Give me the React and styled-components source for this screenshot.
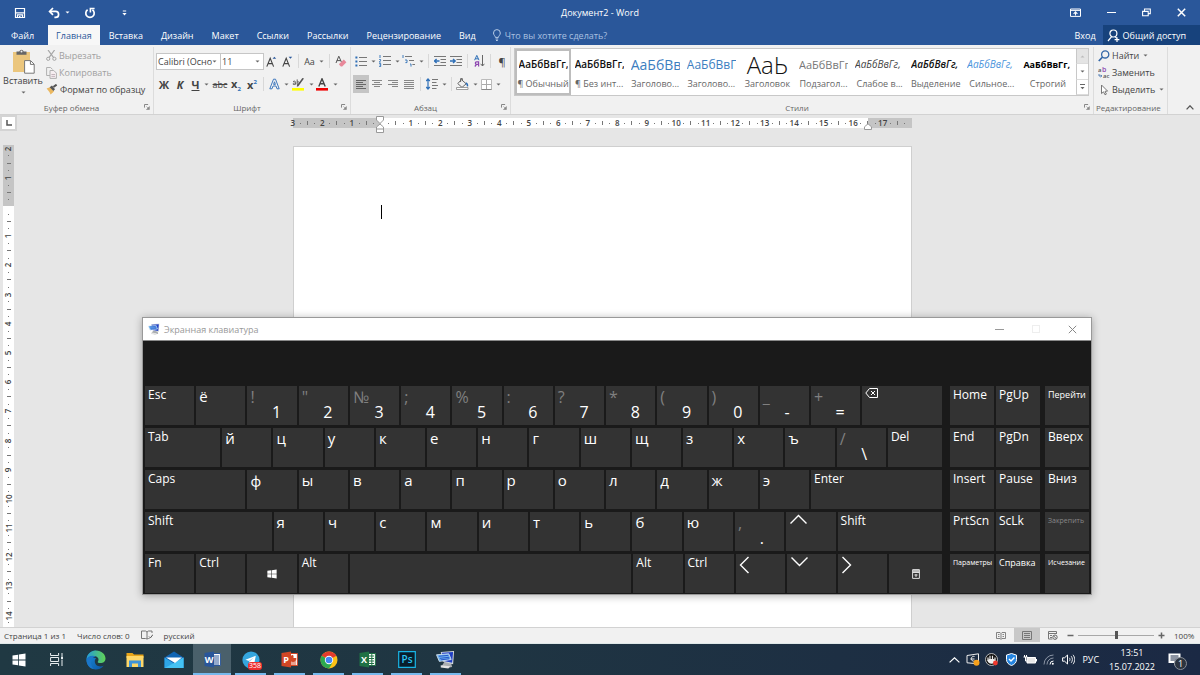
import React from 'react'
import styled, { createGlobalStyle } from 'styled-components'

const GlobalStyle = createGlobalStyle`
  * { box-sizing: border-box; }
  html, body { margin: 0; padding: 0; overflow: hidden; }
  body, button, input, select {
    font-family: "Open Sans", "Noto Sans", sans-serif;
    font-size: 9px;
    color: #444;
  }
  button {
    background: none;
    border: 0;
    padding: 0;
    margin: 0;
  }
  svg { display: block; flex: none; }
`

/* ---------- icons ---------- */

const Icon = ({ w = 12, h = 12, children, ...rest }) => (
  <svg width={w} height={h} viewBox={`0 0 ${w} ${h}`} fill="none" aria-hidden="true" {...rest}>
    {children}
  </svg>
)

const Caret = ({ color = '#666' }) => (
  <Icon w={5} h={3}><path d="M.5 .4h4L2.5 2.6z" fill={color} /></Icon>
)

const SaveIcon = () => (
  <Icon>
    <path d="M1.5 1.5h9v9h-9z" stroke="#fff" strokeWidth="1.2" />
    <path d="M2 5.8h8M3.5 11V7.8h5V11" stroke="#fff" strokeWidth="1.2" />
    <path d="M5 9h1.5v2H5z" fill="#fff" />
  </Icon>
)

const UndoIcon = () => (
  <Icon>
    <path d="M2 4.4h5.6a3 3 0 0 1 0 6H6.4" stroke="#fff" strokeWidth="1.7" />
    <path d="M5 1L1.6 4.4 5 7.8" stroke="#fff" strokeWidth="1.7" />
  </Icon>
)

const RedoIcon = () => (
  <Icon>
    <path d="M3.6 2.8a4.2 4.2 0 1 0 4.8 0" stroke="#fff" strokeWidth="1.7" />
    <path d="M6.4 5.4V1.5h4.2" stroke="#fff" strokeWidth="1.6" />
  </Icon>
)

const CustomizeIcon = () => (
  <Icon w={5} h={6}><path d="M.8 1h3.4" stroke="#fff" /><path d="M.4 3h4.2L2.5 5.4z" fill="#fff" /></Icon>
)

const RibbonOptionsIcon = () => (
  <Icon w={11} h={9}>
    <path d="M.5 1h10v7.4H.5zM.5 2.4h10" stroke="#fff" />
    <path d="M5.5 7.6V4.4M3.6 5.8l1.9-1.9 1.9 1.9" stroke="#fff" strokeWidth="1.1" />
  </Icon>
)

const RestoreIcon = () => (
  <Icon w={9} h={9}>
    <path d="M.6 3.4h5.6v4.4H.6zM2.5 3V1h5.8v4.6H6.6" stroke="#fff" strokeWidth="1.1" />
  </Icon>
)

const CloseIcon = ({ color = '#fff', sw = 1.5 }) => (
  <Icon w={9} h={9}><path d="M.8.8l7.4 7.4M8.2.8L.8 8.2" stroke={color} strokeWidth={sw} /></Icon>
)

const BulbIcon = () => (
  <Icon w={10} h={12}>
    <path d="M3.4 8.4C3.4 7 1.5 6.2 1.5 4a3.4 3.4 0 0 1 6.8 0c0 2.2-1.9 3-1.9 4.4zM3.6 10h2.6M4 11.5h1.8" stroke="#b8cce6" />
  </Icon>
)

const ShareIcon = () => (
  <Icon w={13} h={13}>
    <circle cx="6.4" cy="4.5" r="3.5" stroke="#fff" strokeWidth="1.2" />
    <path d="M4.6 7.6L1 12M8 7.6l1.8 1.6M7.6 10.6h4.8M10 8.2V13" stroke="#fff" strokeWidth="1.2" />
  </Icon>
)

const PasteIcon = () => (
  <Icon w={23} h={25}>
    <path d="M1 3h17v20H1z" fill="#ebc67d" />
    <path d="M4.5 2.4h2.8a2.3 2.3 0 0 1 4.4 0h2.8v3.4h-10z" fill="#666" />
    <circle cx="9.5" cy="2.6" r="1" fill="#f1f1f1" />
    <path d="M12.6 11.6h6l3.6 3.6v9h-9.6z" fill="#fff" stroke="#777" />
    <path d="M18.4 11.8v3.6h3.6" stroke="#777" />
  </Icon>
)

const CutIcon = () => (
  <Icon w={11} h={11}>
    <path d="M2 0l5.6 7.6M8.6 0L3 7.6" stroke="#a6a6a6" strokeWidth="1.2" />
    <circle cx="2.2" cy="8.8" r="1.6" stroke="#a6a6a6" />
    <circle cx="8.4" cy="8.8" r="1.6" stroke="#a6a6a6" />
  </Icon>
)

const CopyIcon = () => (
  <Icon w={11} h={12}>
    <path d="M4 8.5H.6v-8h4l2 2" stroke="#b0b0b0" />
    <path d="M4 3.5h3.8l2.6 2.6v5.3H4z" fill="#f6eef1" stroke="#b0b0b0" />
    <path d="M5.4 7.5h3.6M5.4 9.4h3.6" stroke="#c4b4bb" />
  </Icon>
)

const BrushIcon = () => (
  <Icon w={12} h={11}>
    <path d="M.6 4.4L4 3.2l4 4.4-3.4 3L3.4 8z" fill="#ebb860" />
    <path d="M3.6 3.2L6 1.6l3 3.6-1.6 1.8z" fill="#555" />
    <path d="M7.4 3L10.6.6" stroke="#555" strokeWidth="2" />
  </Icon>
)

const LauncherIcon = () => (
  <Icon w={6} h={6}>
    <path d="M.5 3.6V.5h3.6" stroke="#888" />
    <path d="M2.4 2.4l2.2 2.2M5.4 2.6v2.9H2.5z" stroke="#888" fill="#888" strokeWidth=".6" />
  </Icon>
)

const EraserIcon = () => (
  <Icon w={12} h={13}>
    <path d="M1 8L3.8 1.2 6.4 7M1.8 5.6h4" stroke="#555" />
    <path d="M4.6 8.6l4.2-4 2.6 2.6-4.2 4.2H5.8L4 9.6z" fill="#e8889a" />
  </Icon>
)

const GrowIcon = ({ down }) => (
  <Icon w={11} h={11}>
    <path d="M.8 10.6L4.2 2.2l3.4 8.4M2 7.6h4.4" stroke="#444" strokeWidth="1.1" />
    <path d={down ? 'M6.6.8h3.6L8.4 2.8z' : 'M6.6 2.8h3.6L8.4.8z'} fill="#2a579a" />
  </Icon>
)

const OutlineAIcon = () => (
  <Icon w={11} h={12}>
    <path d="M.8 10.8L4.5 1.2h2l3.7 9.6H8L7 8H4l-1 2.8zM4.6 6.4h1.8L5.5 3.8z" stroke="#3f78bd" strokeWidth="1" />
  </Icon>
)

const HighlightIcon = () => (
  <Icon w={13} h={13}>
    <path d="M12 .6L6.4 8.2l-1.6.6.2-1.6L10.4 0z" fill="#555" />
    <path d="M0 10h12v2.6H0z" fill="#ffff00" />
    <path d="M1 3.6c2-1.2 2.6 0 2.6 1v2M3.4 5c-3-.2-3 1.8-1.2 1.6L3.4 6M5.2 1.4v5M5.2 4c3-1.2 3 3.2 0 2.4" stroke="#555" strokeWidth=".9" />
  </Icon>
)

const FontColorIcon = () => (
  <Icon w={13} h={13}>
    <path d="M2.8 8.4L6 .8l3.2 7.6M4 5.8h4" stroke="#444" strokeWidth="1.4" />
    <path d="M0 10h12v2.6H0z" fill="#f00000" />
  </Icon>
)

const BulletsIcon = () => (
  <Icon w={12} h={11}>
    <path d="M.4.6h2v2h-2zM.4 4.6h2v2h-2zM.4 8.6h2v2h-2z" fill="#2e6fb7" />
    <path d="M4 1.5h8M4 5.5h8M4 9.5h8" stroke="#777" />
  </Icon>
)

const NumbersIcon = () => (
  <Icon w={12} h={12}>
    <path d="M1 0v3M.2 4.5h1.4v1.2L.2 7h1.6M.2 8.5h1.5v3H.2M.5 10h1" stroke="#2e6fb7" strokeWidth=".9" />
    <path d="M4 1.5h8M4 5.5h8M4 9.5h8" stroke="#777" />
  </Icon>
)

const MultilevelIcon = () => (
  <Icon w={13} h={12}>
    <path d="M1 0v3M3 5h2v2.6H3.4M8 9h1v2.6" stroke="#2e6fb7" strokeWidth=".9" />
    <path d="M3 1.5h7M7 5.5h5M10.4 9.5H13" stroke="#777" />
  </Icon>
)

const IndentIcon = ({ right }) => (
  <Icon w={12} h={11}>
    <path d="M0 .5h12M6.5 3.5H12M6.5 6.5H12M0 9.5h12" stroke="#777" />
    <path d={right ? 'M0 5h5M3 3l2.2 2L3 7' : 'M5.5 5h-5M2.6 3L.5 5l2.1 2'} stroke="#2e6fb7" strokeWidth="1.4" />
  </Icon>
)

const SortIcon = () => (
  <Icon w={11} h={12}>
    <path d="M.6 5.2L2.8.4 5 5.2M1.4 3.8h2.8" stroke="#2e6fb7" />
    <path d="M4.6 11.5V6.8H2.6a1.3 1.3 0 0 0 0 2.6h2M2.6 9.4L.8 11.5" stroke="#8d45b0" strokeWidth="1.2" />
    <path d="M8.5 0v11M6.6 8.8l1.9 2.2 1.9-2.2" stroke="#666" />
  </Icon>
)

const AlignIcon = ({ widths, color = '#888', center, right }) => (
  <Icon w={10} h={9}>
    {widths.map((w, i) => {
      const x = center ? (10 - w) / 2 : right ? 10 - w : 0
      return <rect key={i} x={x} y={i * 2} width={w} height="1" fill={color} />
    })}
  </Icon>
)

const SpacingIcon = () => (
  <Icon w={12} h={12}>
    <path d="M2 1v10M.2 3L2 1l1.8 2M.2 9L2 11l1.8-2" stroke="#2e6fb7" strokeWidth="1.2" />
    <path d="M6 1.5h6M6 4.5h4.5M6 7.5h6M6 10.5h4.5" stroke="#777" />
  </Icon>
)

const FillIcon = () => (
  <Icon w={13} h={12}>
    <path d="M5.4 1.6l4.8 4.2L6 9.4 1.8 5.6zM4.6 4V.6h1.8v2" stroke="#666" />
    <path d="M9.8 5c1.6.8 2 2 1.6 3.4" stroke="#2e6fb7" strokeWidth="1.4" />
    <path d="M.5 9.5h11.5v2H.5z" fill="#fff" stroke="#888" strokeWidth=".8" />
  </Icon>
)

const BordersIcon = () => (
  <Icon w={11} h={11}>
    <path d="M.5.5h10v10H.5z" fill="#fff" stroke="#bbb" />
    <path d="M5.5 1v9M1 5.5h9" stroke="#aaa" />
    <path d="M.5 10.5h10" stroke="#888" />
  </Icon>
)

const SearchIcon = () => (
  <Icon w={12} h={12}>
    <circle cx="7.2" cy="4.4" r="3.6" stroke="#3568a8" strokeWidth="1.3" />
    <path d="M4.6 7L.8 11" stroke="#3568a8" strokeWidth="1.8" />
  </Icon>
)

const ArrowIcon = () => (
  <Icon w={12} h={12}>
    <path d="M3.5 1v8.600l2-1.8 1.5 3 1.4-.7L7 7.3l2.6-.2z" stroke="#777" fill="#fff" />
  </Icon>
)

// the "ab → ac" glyph of the replace command
const ReplaceIcon = () => (
  <Icon w={12} h={13}>
    <text x="0" y="6" fontSize="6" fontWeight="600" fill="#555">a</text>
    <text x="4" y="6" fontSize="7" fontWeight="600" fill="#8d45b0">b</text>
    <text x="5" y="12" fontSize="6" fontWeight="600" fill="#555">ac</text>
    <path d="M1 8v2h2.8M2.6 8.8l1.2 1.2-1.2 1.2" stroke="#3568a8" strokeWidth=".8" />
  </Icon>
)

const ChevronUp = ({ color = '#555', w = 8, h = 5, sw = 1.3 }) => (
  <Icon w={w} h={h}><path d={`M.6 ${h - 0.6}L${w / 2} .8l${w / 2 - 0.6} ${h - 1.4}`} stroke={color} strokeWidth={sw} /></Icon>
)

const MonitorIcon = ({ size = 12 }) => (
  <svg width={size} height={size} viewBox="0 0 20 20" aria-hidden="true">
    <path d="M9 12l7 2 1 4-6 1-5-2z" fill="#a9adb0" />
    <path d="M5 2l14-1-1 14-11-3z" fill="#d7dde2" />
    <path d="M6 3l12-1-1 11.5-9-2z" fill="#1f3fc4" />
    <path d="M.5 5l13-1 2.5 6-12.5 2z" fill="#6fb4ee" stroke="#e7eef5" strokeWidth=".8" />
    <path d="M3 6.600l10-1M4 8.800l10-1.2M5 10.400l9-1.2" stroke="#2451c8" />
    <path d="M5 16l10 1-2 2.5-8-1z" fill="#e3e3e3" />
  </svg>
)

const WindowsIcon = ({ size = 14 }) => (
  <svg width={size} height={size} viewBox="0 0 14 14" fill="#fff" aria-hidden="true">
    <path d="M.5 2.5L6 1.7v4.9H.5zM6.8 1.6L13.5.6v6H6.8zM.5 7.4H6v4.9l-5.5-.8zM6.8 7.4h6.7v6l-6.7-1z" />
  </svg>
)

const TaskViewIcon = () => (
  <Icon w={14} h={13}>
    <path d="M.6 0v2.5h8V0M.6 13v-2.5h8V13M.6 4.5h8v4h-8z" stroke="#e8eef0" />
    <path d="M12 0v3M12 6.5V13" stroke="#e8eef0" />
    <path d="M11 3.5h2v2.5h-2z" fill="#e8eef0" />
  </Icon>
)

const EdgeIcon = () => (
  <svg width="20" height="20" viewBox="0 0 20 20" aria-hidden="true">
    <defs>
      <linearGradient id="edgeTop" x1="0" x2="1"><stop offset="0" stopColor="#249bd8" /><stop offset="1" stopColor="#61d455" /></linearGradient>
      <linearGradient id="edgeBody" x1="0" x2="1" y1="0" y2="1"><stop offset="0" stopColor="#1b8fdc" /><stop offset="1" stopColor="#0c55a4" /></linearGradient>
    </defs>
    <path d="M10 .5a9.5 9.5 0 1 0 7.6 15.2c-4 1.8-8.6.2-8.8-4.2-.1-1.4.6-2.5 1.4-3.2C5 7 .5 9 .5 9.7" fill="url(#edgeBody)" />
    <path d="M.5 9.5C1 4 5 .5 10 .5c5.5 0 9.5 3.7 9.5 8 0 3-2.4 4.6-5 4.6-2 0-3.2-.6-2.7-1.4 1.8-2.2.2-5.6-4.2-5.6-3.6 0-6.4 1.4-7.1 3.4z" fill="url(#edgeTop)" />
    <path d="M.5 9.5c2-4 7-4.2 9-3-5 1-6.3 8-1.5 12.8C3.6 18.5.3 14.5.5 9.5z" fill="#1a76c9" />
  </svg>
)

const ExplorerIcon = () => (
  <Icon w={18} h={16}>
    <path d="M.5 1h6l1.5 1.5h9.5V6H.5z" fill="#e8a519" />
    <path d="M.5 4h17v11H.5z" fill="#ffd868" />
    <path d="M3 8.5h12V15h-3v-3.5H6V15H3z" fill="#3f94d9" />
  </Icon>
)

const MailIcon = () => (
  <Icon w={20} h={18}>
    <path d="M.5 6.5L10 .5l9.5 6V17H.5z" fill="#1265b3" />
    <path d="M.5 6.5L10 12.5l9.5-6V17H.5z" fill="#2ea6e6" />
    <path d="M.5 17L12 11l7.5-4.5V17z" fill="#44c2f4" />
    <path d="M2 6.5h16l-7 5.5z" fill="#fff" />
  </Icon>
)

const OfficeIcon = ({ color, letter, kind }) => (
  <Icon w={17} h={17}>
    <path d="M9 2.5h7.4v12H9z" fill="#fff" stroke={color} />
    {kind === 'doc' && <path d="M10 5h5M10 7h5M10 9h5M10 11h5M10 13h5" stroke={color} />}
    {kind === 'sheet' && <path d="M10 5h5M10 7.5h5M10 10h5M10 12.5h5M12.8 3v11" stroke={color} />}
    {kind === 'slide' && <path d="M10 11h5M10 13h5M12 4.5v3h3a3 3 0 1 1-3-3z" stroke={color} fill={color} />}
    <path d="M.5 2L10 .4v16.2L.5 15z" fill={color} />
    <text x="5" y="12" fontSize="9" fontWeight="700" textAnchor="middle" fill="#fff">{letter}</text>
  </Icon>
)

const TelegramIcon = () => (
  <Icon w={18} h={18}>
    <circle cx="9" cy="9" r="8.6" fill="#35a6de" />
    <path d="M3.4 8.7l10.4-4-1.7 8.7-3-2.2-1.6 1.5-.3-2.8z" fill="#fff" />
    <path d="M6.8 9.8l5-3.4-3.8 4z" fill="#a9cfe8" />
  </Icon>
)

const ChromeIcon = () => (
  <Icon w={18} h={18}>
    <circle cx="9" cy="9" r="8.5" fill="#fbc116" />
    <path d="M9 9L1.64 4.75A8.5 8.5 0 0 1 16.36 4.75z" fill="#e33b2e" />
    <path d="M1.64 4.75A8.5 8.5 0 0 0 9 17.5l3-5-3-3.5z" fill="#2da94f" />
    <circle cx="9" cy="9" r="4.2" fill="#fff" />
    <circle cx="9" cy="9" r="3.3" fill="#4285f4" />
  </Icon>
)

const PsIcon = () => (
  <Icon w={18} h={17}>
    <path d="M.7.7h16.6v15.6H.7z" fill="#071d2b" stroke="#19b5e6" strokeWidth="1.2" />
    <text x="9" y="12" fontSize="10" fontWeight="600" textAnchor="middle" fill="#2cc4f2">Ps</text>
  </Icon>
)

/* ---------- title bar and tabs ---------- */

const Screen = styled.div`
  display: flex;
  flex-direction: column;
  height: 100vh;
  background: #e6e6e6;
`

const TitleBar = styled.header`
  display: grid;
  grid-template-columns: 1fr auto 1fr;
  align-items: center;
  height: 25px;
  background: #2a579a;
  color: #fff;
`

const QuickAccess = styled.div`
  display: grid;
  grid-template-columns: 34px 36px 38px auto;
  align-items: center;
  padding-left: 14px;
`

const QuickButton = styled.button`
  display: flex;
  align-items: center;
  gap: 5px;
`

const WindowButtons = styled.div`
  display: flex;
  align-items: center;
  justify-content: flex-end;
  gap: 26px;
  padding-right: 14px;
`

const Minus = styled.span`
  display: block;
  width: 9px;
  height: 1px;
  background: ${(p) => p.$color || '#fff'};
`

const Tabs = styled.nav`
  display: flex;
  align-items: stretch;
  height: 20px;
  background: #2a579a;
`

const Tab = styled.button`
  padding: 0 ${(p) => (p.$active ? 8 : 9)}px;
  line-height: 19px;
  color: ${(p) => (p.$active ? '#2a579a' : '#fff')};
  background: ${(p) => (p.$active ? '#f7f7f7' : 'none')};

  &:first-child { padding: 0 14px 0 11px; }
`

const TellMe = styled.label`
  display: flex;
  flex: 1;
  align-items: center;
  gap: 3px;
  padding-left: 7px;
`

const TellInput = styled.input`
  width: 160px;
  border: 0;
  padding: 0;
  background: none;

  &::placeholder { color: #a9c0e0; opacity: 1; }
`

const SignIn = styled(Tab)`
  padding: 0 7px;
`

const Share = styled.button`
  display: flex;
  align-items: center;
  gap: 3px;
  padding: 0 14px 0 4px;
  background: #17427c;
  color: #fff;
`

/* ---------- ribbon ---------- */

const Ribbon = styled.div`
  display: flex;
  height: 70px;
  padding-top: 2px;
  background: #f1f1f1;
  border-bottom: 1px solid #d2d2d2;
`

const Group = styled.section`
  display: flex;
  flex-direction: column;
  flex: ${(p) => (p.$w ? `0 0 ${p.$w}px` : '1 1 0')};
  min-width: 0;
  padding-left: 2px;
  border-right: 1px solid #dcdcdc;
`

const GroupBody = styled.div`
  display: flex;
  height: 53px;
`

const GroupFooter = styled.footer`
  display: grid;
  grid-template-columns: 1fr 12px;
  align-items: center;
  height: 14px;
  font-size: 8px;
  color: #666;
  text-align: center;
  white-space: nowrap;

  button { justify-self: center; }
`

const PasteButton = styled.button`
  display: flex;
  flex-direction: column;
  align-items: center;
  width: 42px;
  padding-top: 2px;
  line-height: 14px;

  svg:last-child { margin-top: 3px; }
`

const Commands = styled.div`
  display: grid;
  grid-auto-rows: 17px;
  align-content: start;
  padding-left: 2px;
`

const Command = styled.button`
  display: flex;
  align-items: center;
  gap: 2px;
  white-space: nowrap;
  color: ${(p) => (p.disabled ? '#a0a0a0' : '#444')};

  svg:last-child:not(:first-child) { margin-left: 2px; }
`

const ToolRows = styled.div`
  display: flex;
  flex-direction: column;
  gap: 7px;
  padding-top: 6px;
`

const ToolRow = styled.div`
  display: flex;
  align-items: center;
  height: 16px;
`

const Tool = styled.button`
  display: flex;
  align-items: center;
  justify-content: center;
  gap: 4px;
  width: ${(p) => (p.$menu ? 24 : 16)}px;
  height: 18px;
  background: ${(p) => (p.$on ? '#c5c5c5' : 'none')};
  font-size: ${(p) => (p.$small ? 9 : 11)}px;
  font-weight: ${(p) => (p.$light ? 400 : 700)};
  color: #444;
  white-space: nowrap;

  sub, sup {
    font-size: 6px;
    line-height: 6px;
    color: #2e6fb7;
  }
`

const Divider = styled.span`
  width: 1px;
  height: 14px;
  margin: 0 3px;
  background: #d8d8d8;
`

const ComboBox = styled.span`
  display: flex;
  align-items: center;
  width: ${(p) => p.$w}px;
  height: 17px;
  padding-right: 3px;
  margin-right: -1px;
  border: 1px solid #c6c6c6;
  background: #fff;
`

const ComboSelect = styled.select`
  appearance: none;
  flex: 1;
  min-width: 0;
  height: 15px;
  border: 0;
  padding: 0 0 0 1px;
  background: none;
  text-overflow: clip;
`

const Gallery = styled.div`
  display: flex;
  flex: 1;
  height: 48px;
  margin: 1px 4px 0 1px;
  border: 1px solid #c8c8c8;
  background: #fff;
`

const StyleCard = styled.button`
  display: flex;
  flex: 1;
  flex-direction: column;
  align-items: center;
  min-width: 0;
  border: 2px solid ${(p) => (p.$active ? '#bdbdbd' : 'transparent')};
  overflow: hidden;
`

const Preview = styled.span`
  width: 49px;
  height: 27px;
  overflow: hidden;
  white-space: nowrap;
  text-align: ${(p) => (p.$big ? 'center' : 'left')};
  font-size: ${(p) => p.$size || 10}px;
  line-height: 27px;
  font-weight: ${(p) => p.$weight || 400};
  font-style: ${(p) => (p.$italic ? 'italic' : 'normal')};
  color: ${(p) => p.$color || '#111'};
`

const StyleName = styled.span`
  line-height: 12px;
  color: #666;
  white-space: nowrap;
`

const GalleryScroll = styled.div`
  display: grid;
  grid-template-rows: repeat(3, 1fr);
  width: 12px;

  button {
    display: grid;
    place-items: center;
    border-left: 1px solid #c8c8c8;
    border-bottom: 1px solid #dcdcdc;
  }
  button:first-child { background: #e4e4e4; }
`

const RibbonEnd = styled.div`
  display: flex;
  flex: 0 0 32px;
  align-items: flex-end;
  justify-content: center;
  padding: 0 0 4px 12px;
`

/* ---------- document area ---------- */

const Workspace = styled.main`
  position: relative;
  display: grid;
  grid-template-columns: 17px 1fr 12px;
  grid-template-rows: 30px 1fr;
  flex: 1;
  min-height: 0;
`

const TabStop = styled.button`
  display: grid;
  place-items: center;
  width: 17px;
  height: 16px;
  border: 2px solid #d4d4d4;
  background: #fff;
`

const PaperColumn = styled.div`
  display: flex;
  justify-content: center;
  min-height: 0;
`

const HRuler = styled.div`
  width: 100%;
  max-width: 619px;
  height: 10px;
  margin-top: 3px;
  background: linear-gradient(90deg, #c5c5c5 14.2%, #fff 14.2% 92.9%, #c5c5c5 92.9%);
`

const HTicks = styled.div`
  display: flex;
  margin: 0 4px 0 -4px;
`

const VRuler = styled.div`
  width: 11px;
  min-height: 0;
  margin-left: 3px;
  overflow: hidden;
  background: linear-gradient(#c5c5c5 61px, #fff 61px);
`

const VTicks = styled.div`
  display: flex;
  flex-direction: column;
  height: 100%;
`

const Tick = styled.span`
  display: flex;
  flex: 1 1 0;
  align-items: center;
  justify-content: center;
  min-width: 0;
  min-height: 0;
  height: ${(p) => (p.$vertical ? 'auto' : '10px')};
  width: ${(p) => (p.$vertical ? '11px' : 'auto')};
  font-size: 8px;
  line-height: 10px;
  color: #444;
  white-space: nowrap;

  b {
    font-weight: 600;
    transform: ${(p) => (p.$vertical ? 'rotate(-90deg)' : 'none')};
  }
  i {
    flex: none;
    width: ${(p) => (p.$vertical && p.$long ? 4 : 1)}px;
    height: ${(p) => (!p.$vertical && p.$long ? 4 : 1)}px;
    background: #777;
  }
`

const IndentMarks = styled.div`
  position: absolute;
  z-index: 1;
  top: ${(p) => (p.$right ? 8 : 1)}px;
  left: ${(p) => p.$left};
`

const Paper = styled.article`
  width: 100%;
  max-width: 619px;
  margin-top: 1px;
  padding: 58px 87px;
  border: solid #cfcfcf;
  border-width: 1px 1px 0;
  background: #fff;
`

const TextCaret = styled.span`
  display: block;
  width: 1px;
  height: 14px;
  background: #000;
`

/* ---------- on-screen keyboard ---------- */

const KeyboardWindow = styled.section`
  position: absolute;
  z-index: 2;
  top: 202px;
  left: 142px;
  width: 950px;
  border: 1px solid #999;
  background: #1a1a1a;
  box-shadow: 0 1px 8px rgba(0, 0, 0, .3);
`

const KeyboardTitle = styled.header`
  display: flex;
  align-items: center;
  gap: 4px;
  height: 23px;
  padding: 0 14px 0 5px;
  border-bottom: 1px solid #8a8a8a;
  background: #fff;
  color: #999;
`

const KeyboardButtons = styled.div`
  display: flex;
  align-items: center;
  gap: 28px;
  margin-left: auto;
`

const MaxBox = styled.span`
  display: block;
  width: 8px;
  height: 8px;
  border: 1px solid #eee;
`

const KeyArea = styled.div`
  display: flex;
  gap: 8px;
  padding: 45px 2px 1px 2px;
`

const KeyRows = styled.div`
  display: flex;
  flex-direction: column;
  flex: 1;
  gap: 3px;
`

const KeyRow = styled.div`
  display: grid;
  grid-template-columns: ${(p) => p.$cols};
  gap: 2px;
`

const NavBlock = styled.div`
  display: grid;
  grid-template-columns: 44px 44px 1px 44px;
  grid-auto-rows: 39px;
  gap: 3px 2px;

  button:nth-child(3n) { grid-column: 4; }
`

const Key = styled.button`
  display: flex;
  align-items: ${(p) => (p.$center ? 'center' : 'flex-start')};
  justify-content: ${(p) => (p.$center ? 'center' : 'flex-start')};
  min-width: 0;
  height: 39px;
  padding: ${(p) => (p.$center ? '0' : '1px 3px')};
  background: #333;
  color: ${(p) => (p.$dim ? '#888' : '#fff')};
  font-size: ${(p) => p.$size || 12}px;
  line-height: 16px;
  text-align: left;
  white-space: nowrap;
`

const LetterKey = styled(Key)`
  font-size: 15px;
  line-height: 18px;
`

const DualKey = styled(Key)`
  display: grid;
  grid-template-columns: 1fr 1fr;
  grid-template-rows: 15px 15px;
  align-items: center;
  padding-top: 3px;
  font-size: 16px;

  span { color: #808080; }
  b {
    grid-area: 2 / 2;
    font-weight: 400;
    line-height: 14px;
  }
`

/* ---------- status bar ---------- */

const StatusBar = styled.footer`
  display: flex;
  align-items: center;
  height: 17px;
  padding: 0 0 1px 4px;
  gap: 11px;
  border-top: 1px solid #d2d2d2;
  border-bottom: 1px solid #dfe8e8;
  background: #f1f1f1;
  font-size: 8px;
`

const Views = styled.div`
  display: flex;
  align-self: stretch;
  margin-left: auto;
`

const ViewButton = styled.button`
  display: grid;
  place-items: center;
  width: 26px;
  background: ${(p) => (p.$on ? '#c8c8c8' : 'none')};
`

const Zoom = styled.div`
  display: flex;
  align-items: center;
  gap: 4px;
  padding-right: 6px;
  margin-left: -10px;

  output { width: 20px; margin-left: 5px; }
`

const Slider = styled.input`
  appearance: none;
  width: 76px;
  height: 8px;
  margin: 0;
  background: linear-gradient(#a8a8a8, #a8a8a8) center / 100% 1px no-repeat;

  &::-webkit-slider-thumb {
    appearance: none;
    width: 3px;
    height: 8px;
    background: #555;
  }
`

/* ---------- taskbar ---------- */

const Taskbar = styled.footer`
  display: flex;
  height: 31px;
  background: linear-gradient(90deg, #203943, #1f3542 40%, #1b2944);
  color: #fff;
`

const TaskButton = styled.button`
  display: flex;
  flex: 0 0 ${(p) => (p.$narrow ? 38 : 39)}px;
  flex-direction: column;
  align-items: center;
  justify-content: center;
  background: ${(p) => (p.$active ? '#4a606b' : 'none')};
`

const RunningButton = styled(TaskButton)`
  position: relative;

  &::after {
    content: '';
    position: absolute;
    right: ${(p) => (p.$active ? 0 : 4)}px;
    bottom: 0;
    left: ${(p) => (p.$active ? 0 : 4)}px;
    height: 2px;
    background: #76b9ed;
  }
`

const Count = styled.span`
  position: absolute;
  right: 8px;
  bottom: 5px;
  padding: 0 1px;
  border-radius: 3px;
  background: #ee2f2f;
  font-size: 7px;
  line-height: 8px;
  color: #fff;
`

const Tray = styled.div`
  display: flex;
  align-items: center;
  gap: 5px;
  margin-left: auto;
`

const TrayButton = styled.button`
  display: grid;
  place-items: center;
  width: 14px;
`

const Language = styled.button`
  margin-left: 2px;
  color: #fff;
`

const Clock = styled.time`
  margin-left: 5px;
  line-height: 14px;
  text-align: center;
`

const Notify = styled.button`
  position: relative;
  margin-left: 8px;
  width: 32px;
`

const Badge = styled.span`
  position: absolute;
  top: 4px;
  left: 6px;
  width: 13px;
  height: 13px;
  border: 1px solid #8a8f98;
  border-radius: 50%;
  background: #2c3440;
  line-height: 11px;
  color: #fff;
`

/* ---------- data ---------- */

const tabs = ['Файл', 'Главная', 'Вставка', 'Дизайн', 'Макет', 'Ссылки', 'Рассылки', 'Рецензирование', 'Вид']

const sample = 'АаБбВвГг,'
const docStyles = [
  { name: '¶ Обычный', weight: 600, active: true },
  { name: '¶ Без инт...', weight: 600 },
  { name: 'Заголово...', size: 14, color: '#3c7ebf' },
  { name: 'Заголово...', size: 12, color: '#3c7ebf' },
  { name: 'Заголовок', size: 24, big: true, text: 'АаЬ', weight: 300 },
  { name: 'Подзагол...', size: 11, color: '#777' },
  { name: 'Слабое в...', color: '#444', italic: true },
  { name: 'Выделение', weight: 600, italic: true },
  { name: 'Сильное...', color: '#4a94dc', italic: true },
  { name: 'Строгий', weight: 700, size: 9, color: '#000' },
]

const keyRows = [
  ['Esc', 'ё', '! 1', '" 2', '№ 3', '; 4', '% 5', ': 6', '? 7', '* 8', '( 9', ') 0', '_ -', '+ =', { icon: 'back', u: 1.62 }],
  [{ t: 'Tab', u: 1.53 }, ...'йцукенгшщзхъ', '/ \\', { t: 'Del', u: 1.1 }],
  [{ t: 'Caps', u: 2.04 }, ...'фывапролджэ', { t: 'Enter', u: 2.66 }],
  [{ t: 'Shift', u: 2.57 }, ...'ячсмитьбю', ', .', { icon: 'up' }, { t: 'Shift', u: 2.12 }],
  ['Fn', 'Ctrl', { icon: 'win', center: true }, 'Alt', { t: '', u: 5.72 }, 'Alt', 'Ctrl', { icon: 'left' }, { icon: 'down' }, { icon: 'right' }, { icon: 'menu', u: 1.07, center: true }],
]

const navKeys = [
  ['Home'], ['PgUp'], ['Перейти', 9],
  ['End'], ['PgDn'], ['Вверх'],
  ['Insert'], ['Pause'], ['Вниз'],
  ['PrtScn'], ['ScLk'], ['Закрепить', 7, true],
  ['Параметры', 7], ['Справка', 9], ['Исчезание', 7],
]

const keyIcons = {
  back: <Icon w={13} h={12}><path d="M4.5 1.5h8v9h-8L.8 6zM6 4l4 4M10 4L6 8" stroke="#fff" /></Icon>,
  up: <Icon w={18} h={12}><path d="M1.5 10.5L9.5 2.5l8 8" stroke="#fff" strokeWidth="1.4" /></Icon>,
  down: <Icon w={18} h={12}><path d="M1.5 2.5L9.5 10.5l8-8" stroke="#fff" strokeWidth="1.4" /></Icon>,
  left: <Icon w={12} h={19}><path d="M9.5 2L1.5 10l8 8" stroke="#fff" strokeWidth="1.4" /></Icon>,
  right: <Icon w={12} h={19}><path d="M1.5 2L9.5 10l-8 8" stroke="#fff" strokeWidth="1.4" /></Icon>,
  win: <WindowsIcon size={10} />,
  menu: <Icon w={8} h={10}><path d="M.6.6h6.8v8.8H.6zM.6 3.5h6.8M2.4 6h3.2M4 5v3" stroke="#ddd" /><path d="M1 1h6v2H1z" fill="#bbb" /></Icon>,
}

/* ---------- parts ---------- */

function makeTicks(labels) {
  return labels.flatMap((label) => [label, '.', '|', '.'])
}

const hTicks = makeTicks([3, 2, 1, '', ...Array.from({ length: 17 }, (_, i) => i + 1)])
const vTicks = makeTicks([2, 1, '', ...Array.from({ length: 14 }, (_, i) => i + 1)]).slice(0, 66)

const Ticks = ({ items, vertical }) =>
  items.map((t, i) => (
    <Tick key={i} $vertical={vertical} $long={t === '|'}>
      {t === '.' || t === '|' ? <i /> : <b>{t}</b>}
    </Tick>
  ))

const columns = (row) => row.map((item) => `minmax(0, ${item.u || 1}fr)`).join(' ')

function OfficeKey({ item }) {
  if (typeof item === 'object') {
    return (
      <Key $center={item.center} aria-label={item.icon || item.t || 'Пробел'}>
        {item.icon ? keyIcons[item.icon] : item.t}
      </Key>
    )
  }
  if (item.includes(' ')) {
    const [top, bottom] = item.split(' ')
    return <DualKey><span>{top}</span><b>{bottom}</b></DualKey>
  }
  return item.length === 1 ? <LetterKey>{item}</LetterKey> : <Key>{item}</Key>
}

function RibbonGroup({ title, width, launcher = true, children }) {
  return (
    <Group $w={width}>
      <GroupBody>{children}</GroupBody>
      <GroupFooter>
        <span>{title}</span>
        {launcher && <button aria-label={`Параметры: ${title}`}><LauncherIcon /></button>}
      </GroupFooter>
    </Group>
  )
}

function WordRibbon() {
  return (
    <Ribbon>
      <RibbonGroup title="Буфер обмена" width={154}>
        <PasteButton><PasteIcon />Вставить<Caret /></PasteButton>
        <Commands>
          <Command disabled><CutIcon />Вырезать</Command>
          <Command disabled><CopyIcon />Копировать</Command>
          <Command><BrushIcon />Формат по образцу</Command>
        </Commands>
      </RibbonGroup>

      <RibbonGroup title="Шрифт" width={197}>
        <ToolRows>
          <ToolRow>
            <ComboBox $w={65}>
              <ComboSelect aria-label="Шрифт"><option>Calibri (Основной текст)</option></ComboSelect>
              <Caret />
            </ComboBox>
            <ComboBox $w={44}>
              <ComboSelect aria-label="Размер"><option>11</option></ComboSelect>
              <Caret />
            </ComboBox>
            <Tool aria-label="Увеличить"><GrowIcon /></Tool>
            <Tool aria-label="Уменьшить"><GrowIcon down /></Tool>
            <Divider />
            <Tool $menu $light $small>Aa<Caret /></Tool>
            <Divider />
            <Tool aria-label="Очистить формат"><EraserIcon /></Tool>
          </ToolRow>
          <ToolRow>
            <Tool>Ж</Tool>
            <Tool><em>К</em></Tool>
            <Tool $menu><u>Ч</u><Caret /></Tool>
            <Tool $light $small><s>abc</s></Tool>
            <Tool><span>x<sub>2</sub></span></Tool>
            <Tool><span>x<sup>2</sup></span></Tool>
            <Divider />
            <Tool $menu aria-label="Эффекты"><OutlineAIcon /><Caret /></Tool>
            <Tool $menu aria-label="Выделение цветом"><HighlightIcon /><Caret /></Tool>
            <Tool $menu aria-label="Цвет текста"><FontColorIcon /><Caret /></Tool>
          </ToolRow>
        </ToolRows>
      </RibbonGroup>

      <RibbonGroup title="Абзац" width={160}>
        <ToolRows>
          <ToolRow>
            <Tool $menu aria-label="Маркеры"><BulletsIcon /><Caret /></Tool>
            <Tool $menu aria-label="Нумерация"><NumbersIcon /><Caret /></Tool>
            <Tool $menu aria-label="Многоуровневый список"><MultilevelIcon /><Caret /></Tool>
            <Divider />
            <Tool aria-label="Уменьшить отступ"><IndentIcon /></Tool>
            <Tool aria-label="Увеличить отступ"><IndentIcon right /></Tool>
            <Divider />
            <Tool aria-label="Сортировка"><SortIcon /></Tool>
            <Divider />
            <Tool $light>¶</Tool>
          </ToolRow>
          <ToolRow>
            <Tool $on aria-label="По левому краю"><AlignIcon widths={[10, 7, 10, 7, 10]} color="#666" /></Tool>
            <Tool aria-label="По центру"><AlignIcon widths={[10, 6, 10, 6]} center /></Tool>
            <Tool aria-label="По правому краю"><AlignIcon widths={[10, 6, 10, 6]} right /></Tool>
            <Tool aria-label="По ширине"><AlignIcon widths={[10, 10, 10, 10, 10]} /></Tool>
            <Divider />
            <Tool $menu aria-label="Интервал"><SpacingIcon /><Caret /></Tool>
            <Divider />
            <Tool $menu aria-label="Заливка"><FillIcon /><Caret /></Tool>
            <Tool $menu aria-label="Границы"><BordersIcon /><Caret /></Tool>
          </ToolRow>
        </ToolRows>
      </RibbonGroup>

      <RibbonGroup title="Стили">
        <Gallery>
          {docStyles.map((s, i) => (
            <StyleCard key={i} $active={s.active}>
              <Preview $size={s.size} $weight={s.weight} $color={s.color} $italic={s.italic} $big={s.big}>
                {s.text || sample}
              </Preview>
              <StyleName>{s.name}</StyleName>
            </StyleCard>
          ))}
          <GalleryScroll>
            <button aria-label="Вверх"><Icon w={5} h={3}><path d="M.5 2.6h4L2.5.6z" fill="#bbb" /></Icon></button>
            <button aria-label="Вниз"><Caret /></button>
            <button aria-label="Ещё"><Icon w={5} h={6}><path d="M0 .5h5" stroke="#666" /><path d="M.5 3h4L2.5 5.2z" fill="#666" /></Icon></button>
          </GalleryScroll>
        </Gallery>
      </RibbonGroup>

      <RibbonGroup title="Редактирование" width={74} launcher={false}>
        <Commands>
          <Command><SearchIcon />Найти<Caret /></Command>
          <Command><ReplaceIcon />Заменить</Command>
          <Command><ArrowIcon />Выделить<Caret /></Command>
        </Commands>
      </RibbonGroup>

      <RibbonEnd><button aria-label="Свернуть ленту"><ChevronUp /></button></RibbonEnd>
    </Ribbon>
  )
}

function ScreenKeyboard() {
  return (
    <KeyboardWindow>
      <KeyboardTitle>
        <MonitorIcon />
        Экранная клавиатура
        <KeyboardButtons>
          <button aria-label="Свернуть"><Minus $color="#999" /></button>
          <button aria-label="Развернуть" disabled><MaxBox /></button>
          <button aria-label="Закрыть"><CloseIcon color="#888" sw={1} /></button>
        </KeyboardButtons>
      </KeyboardTitle>
      <KeyArea>
        <KeyRows>
          {keyRows.map((row, i) => (
            <KeyRow key={i} $cols={columns(row)}>
              {row.map((item, j) => <OfficeKey key={j} item={item} />)}
            </KeyRow>
          ))}
        </KeyRows>
        <NavBlock>
          {navKeys.map(([label, size, dim]) => (
            <Key key={label} $size={size} $dim={dim}>{label}</Key>
          ))}
        </NavBlock>
      </KeyArea>
    </KeyboardWindow>
  )
}

function Status() {
  return (
    <StatusBar>
      <span>Страница 1 из 1</span>
      <span>Число слов: 0</span>
      <Icon w={12} h={10}>
        <path d="M.5 1h4l1.5 1v7L4.5 8.5h-4zM6 2l1.5-1H11v2M6 9l1.5-.5h1" stroke="#777" />
        <path d="M8 6.5l1.4 1.4L12 4.5" stroke="#555" />
      </Icon>
      <span>русский</span>
      <Views>
        <ViewButton aria-label="Режим чтения">
          <Icon w={10} h={9}><path d="M.5 1.5h3.5l1 1 1-1h3.5v6H6l-1 1-1-1H.5zM5 2.5v5.5M2 3.5h1.5M2 5.5h1.5M6.5 3.5H8M6.5 5.5H8" stroke="#777" strokeWidth=".9" /></Icon>
        </ViewButton>
        <ViewButton $on aria-label="Разметка страницы">
          <Icon w={10} h={9}><path d="M.5.5h9v8h-9zM2 2.5h6M2 4.5h6M2 6.5h6" stroke="#777" /></Icon>
        </ViewButton>
        <ViewButton aria-label="Веб-документ">
          <Icon w={10} h={9}><path d="M4.5 8H.5V.5h8V3M.5 2.5h8M2 4.5h2M2 6.5h2" stroke="#777" /><circle cx="7" cy="6.2" r="2.2" stroke="#666" /><path d="M5.5 4.8l3 3" stroke="#666" /></Icon>
        </ViewButton>
      </Views>
      <Zoom>
        <button aria-label="Уменьшить масштаб"><Icon w={7} h={7}><path d="M.5 3.5h6" stroke="#666" strokeWidth="1.5" /></Icon></button>
        <Slider type="range" min="0" max="100" defaultValue="50" aria-label="Масштаб" />
        <button aria-label="Увеличить масштаб"><Icon w={7} h={7}><path d="M.5 3.5h6M3.5.5v6" stroke="#666" strokeWidth="1.5" /></Icon></button>
        <output>100%</output>
      </Zoom>
    </StatusBar>
  )
}

function WindowsTaskbar() {
  return (
    <Taskbar>
      <TaskButton $narrow aria-label="Пуск"><WindowsIcon size={14} /></TaskButton>
      <TaskButton $narrow aria-label="Представление задач"><TaskViewIcon /></TaskButton>
      <TaskButton aria-label="Edge"><EdgeIcon /></TaskButton>
      <TaskButton aria-label="Проводник"><ExplorerIcon /></TaskButton>
      <TaskButton aria-label="Почта"><MailIcon /></TaskButton>
      <RunningButton $active $narrow aria-label="Word"><OfficeIcon color="#2a569a" letter="W" kind="doc" /></RunningButton>
      <RunningButton aria-label="Telegram"><TelegramIcon /><Count>358</Count></RunningButton>
      <RunningButton aria-label="PowerPoint"><OfficeIcon color="#d24625" letter="P" kind="slide" /></RunningButton>
      <RunningButton aria-label="Chrome"><ChromeIcon /></RunningButton>
      <RunningButton aria-label="Excel"><OfficeIcon color="#1f7145" letter="X" kind="sheet" /></RunningButton>
      <RunningButton aria-label="Photoshop"><PsIcon /></RunningButton>
      <RunningButton aria-label="Экранная клавиатура"><MonitorIcon size={19} /></RunningButton>

      <Tray>
        <TrayButton aria-label="Скрытые значки"><ChevronUp w={11} h={6} color="#fff" sw={1.2} /></TrayButton>
        <TrayButton aria-label="Экран">
          <Icon w={14} h={13}><path d="M1 2.5L12.5.8v10L1 9.8z" stroke="#eee" /><path d="M8.5 3.5a2.4 2.4 0 1 0 0 4.5M4.5 6h4" stroke="#eee" /><circle cx="10.5" cy="9.8" r="3" fill="#f6a01c" /></Icon>
        </TrayButton>
        <TrayButton aria-label="Программа">
          <Icon w={14} h={13}><circle cx="6.5" cy="6.5" r="6" fill="#111" stroke="#ddd" strokeWidth=".8" /><path d="M3 8V4.5M5 7V2.8M7.5 7V2.8M10 8V4.5" stroke="#eee" strokeWidth="1.2" /><path d="M2.5 7c0 5 8 5 8 0l-2-1H4.5z" fill="#eee" /><circle cx="10.4" cy="10" r="2.4" fill="#f0392f" /></Icon>
        </TrayButton>
        <TrayButton aria-label="Безопасность">
          <Icon w={11} h={13}><path d="M5.5.5l5 1.6v4.4c0 3-2 5-5 6-3-1-5-3-5-6V2.1z" fill="#2585e0" stroke="#fff" /><path d="M3 6l2 2 3.4-3.6" stroke="#fff" strokeWidth="1.4" /></Icon>
        </TrayButton>
        <TrayButton aria-label="Батарея">
          <Icon w={14} h={10}><path d="M4 2.5h8.5v5.5H4z" fill="#e8e8e8" stroke="#fff" /><path d="M13.5 4v2.5M.5 2h4M1.5 0v2M3.5 0v2M2.5 2v4h2" stroke="#fff" /></Icon>
        </TrayButton>
        <TrayButton aria-label="Сеть">
          <Icon w={12} h={11}><path d="M1 10.5A9.5 9.5 0 0 1 10.5 1M4 10.5A6.5 6.5 0 0 1 10.5 4" stroke="#8b95a5" /><path d="M7 10.5A3.5 3.5 0 0 1 10.5 7" stroke="#fff" /><circle cx="9.8" cy="9.8" r="1" fill="#fff" /></Icon>
        </TrayButton>
        <TrayButton aria-label="Громкость">
          <Icon w={13} h={11}><path d="M.6 3.8h2L5.5 1v9L2.6 7.2h-2z" stroke="#fff" /><path d="M7.3 3.8c.9 1 .9 2.4 0 3.4M9.2 2.2c1.6 1.9 1.6 4.7 0 6.6M11 .8c2.2 2.6 2.2 6.8 0 9.4" stroke="#fff" strokeWidth=".9" /></Icon>
        </TrayButton>
        <Language>РУС</Language>
        <Clock>13:51<br />15.07.2022</Clock>
        <Notify aria-label="Уведомления">
          <Icon w={14} h={13}><path d="M.5.5h12v9.5H9L6 12.5V10H.5z" fill="#fff" /><path d="M2.5 3h8M2.5 5h8M2.5 7h8" stroke="#1b2944" /></Icon>
          <Badge>1</Badge>
        </Notify>
      </Tray>
    </Taskbar>
  )
}

export default function App() {
  return (
    <Screen>
      <GlobalStyle />
      <TitleBar>
        <QuickAccess>
          <QuickButton aria-label="Сохранить"><SaveIcon /></QuickButton>
          <QuickButton aria-label="Отменить"><UndoIcon /><Caret color="#fff" /></QuickButton>
          <QuickButton aria-label="Повторить"><RedoIcon /></QuickButton>
          <QuickButton aria-label="Настройка панели"><CustomizeIcon /></QuickButton>
        </QuickAccess>
        <span>Документ2 - Word</span>
        <WindowButtons>
          <button aria-label="Параметры ленты"><RibbonOptionsIcon /></button>
          <button aria-label="Свернуть"><Minus /></button>
          <button aria-label="Восстановить"><RestoreIcon /></button>
          <button aria-label="Закрыть"><CloseIcon /></button>
        </WindowButtons>
      </TitleBar>

      <Tabs>
        {tabs.map((t) => <Tab key={t} $active={t === 'Главная'}>{t}</Tab>)}
        <TellMe>
          <BulbIcon />
          <TellInput aria-label="Помощник" placeholder="Что вы хотите сделать?" />
        </TellMe>
        <SignIn>Вход</SignIn>
        <Share><ShareIcon />Общий доступ</Share>
      </Tabs>

      <WordRibbon />

      <Workspace>
        <TabStop aria-label="Табуляция">
          <Icon w={6} h={6}><path d="M1 0v5h5" stroke="#555" strokeWidth="1.5" /></Icon>
        </TabStop>
        <PaperColumn>
          <HRuler><HTicks><Ticks items={hTicks} /></HTicks></HRuler>
        </PaperColumn>
        <span />
        <VRuler><VTicks><Ticks items={vTicks} vertical /></VTicks></VRuler>
        <PaperColumn>
          <Paper><TextCaret /></Paper>
        </PaperColumn>
        <IndentMarks $left="calc(50% - 224px)">
          <Icon w={8} h={17}><path d="M.5.5h7V4l-3.5 3.5L.5 4zM4 8l3.5 3v5.5h-7V11zM.5 13h7" fill="#fff" stroke="#999" /></Icon>
        </IndentMarks>
        <IndentMarks $right $left="calc(50% + 264px)">
          <Icon w={8} h={7}><path d="M4 .8l3.5 3v2.7h-7V3.8z" fill="#fff" stroke="#999" /></Icon>
        </IndentMarks>
        <ScreenKeyboard />
      </Workspace>

      <Status />
      <WindowsTaskbar />
    </Screen>
  )
}
